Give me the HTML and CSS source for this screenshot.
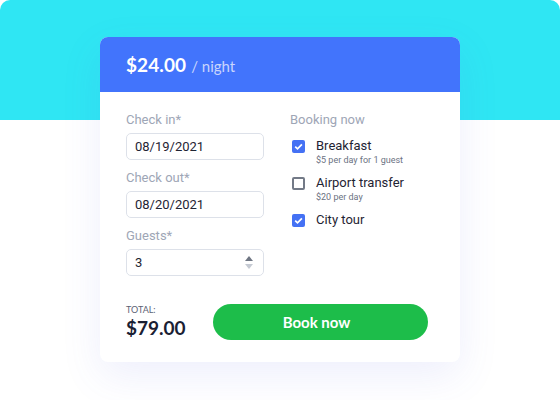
FILE: index.html
```html
<!DOCTYPE html>
<html lang="en">
<head>
<meta charset="utf-8">
<title>Booking</title>
<link rel="stylesheet" href="styles.css">
</head>
<body>
<div class="page">
  <div class="card">
    <div class="card-head">
      <span class="price">$24.00</span><span class="per">/ night</span>
    </div>
    <div class="card-body">
      <div class="col-left">
        <label class="label">Check in*</label>
        <div class="input">08/19/2021</div>
        <label class="label">Check out*</label>
        <div class="input">08/20/2021</div>
        <label class="label">Guests*</label>
        <div class="input number">3<span class="spin"><span class="up"></span><span class="down"></span></span></div>
      </div>
      <div class="col-right">
        <div class="label">Booking now</div>
        <div class="opt">
          <div class="opt-row"><span class="cb checked"><svg viewBox="0 0 13 13" width="13" height="13"><path d="M3.2 6.6 L5.5 8.9 L9.9 4.3" fill="none" stroke="#fff" stroke-width="1.7"/></svg></span>Breakfast</div>
          <div class="opt-sub">$5 per day for 1 guest</div>
        </div>
        <div class="opt">
          <div class="opt-row"><span class="cb"></span>Airport transfer</div>
          <div class="opt-sub">$20 per day</div>
        </div>
        <div class="opt">
          <div class="opt-row"><span class="cb checked"><svg viewBox="0 0 13 13" width="13" height="13"><path d="M3.2 6.6 L5.5 8.9 L9.9 4.3" fill="none" stroke="#fff" stroke-width="1.7"/></svg></span>City tour</div>
        </div>
      </div>
    </div>
    <div class="card-foot">
      <div class="total">
        <div class="total-label">TOTAL:</div>
        <div class="total-value">$79.00</div>
      </div>
      <button class="book">Book now</button>
    </div>
  </div>
</div>
</body>
</html>
```

FILE: styles.css
```css
* { box-sizing: border-box; }
html, body { margin: 0; padding: 0; background: #fff; }
body { width: 560px; height: 400px; overflow: hidden; font-family: Roboto, "Liberation Sans", sans-serif; }
.page {
  height: 400px;
  padding-top: 37px;
  background: linear-gradient(#2fe6f3 0, #2fe6f3 120px, #fff 120px);
  border-radius: 10px 10px 0 0;
}
.card {
  width: 360px;
  margin: 0 auto;
  background: #fff;
  border-radius: 8px;
  overflow: hidden;
  box-shadow: 0 14px 40px rgba(90, 100, 230, 0.10);
}
.card-head {
  height: 55px;
  background: #4274fc;
  padding: 0 26px;
  display: flex;
  align-items: center;
  font-family: Lato, "Open Sans", sans-serif;
}
.price { color: #fff; font-size: 19px; font-weight: 700; letter-spacing: 0.1px; }
.per { color: #c9d5fd; font-size: 15px; margin-left: 5px; padding-top: 2px; }
.card-body {
  display: grid;
  grid-template-columns: 138px 1fr;
  column-gap: 26px;
  padding: 20px 26px 0;
}
.col-left { display: flex; flex-direction: column; }
.label {
  font-size: 13px;
  line-height: 16px;
  color: #9ea6b6;
  margin-bottom: 5px;
}
.input {
  height: 27px;
  border: 1px solid #dde1e9;
  border-radius: 5px;
  padding: 0 8px;
  font-size: 13px;
  line-height: 25px;
  color: #1f2433;
  margin-bottom: 10px;
}
.input:last-child { margin-bottom: 0; }
.number { display: flex; justify-content: space-between; align-items: center; }
.spin { display: flex; flex-direction: column; gap: 3px; margin-right: 2px; }
.up { width: 0; height: 0; border-left: 4.5px solid transparent; border-right: 4.5px solid transparent; border-bottom: 5px solid #6f7683; }
.down { width: 0; height: 0; border-left: 4.5px solid transparent; border-right: 4.5px solid transparent; border-top: 5px solid #c5cad3; }
.col-right .label { margin-bottom: 10px; }
.opt { margin-bottom: 9px; }
.opt-row {
  display: flex;
  align-items: center;
  font-size: 13px;
  line-height: 16px;
  color: #1f2433;
}
.cb {
  width: 13px; height: 13px;
  margin-left: 2px;
  margin-right: 11px;
  border: 2px solid #737a87;
  border-radius: 2px;
  display: inline-flex;
}
.cb.checked { border: none; background: #4471f4; }
.opt-sub {
  font-size: 9px;
  line-height: 11px;
  color: #6b7282;
  margin-top: 1px;
  padding-left: 26px;
}
.card-foot {
  display: flex;
  align-items: center;
  justify-content: space-between;
  padding: 28px 32px 22px 26px;
}
.total-label { font-size: 9px; color: #5b6275; line-height: 11px; font-family: Lato, sans-serif; }
.total-value { font-family: Lato, sans-serif; font-size: 19px; font-weight: 700; color: #1a2033; line-height: 24px; margin-top: 1px; }
.book {
  width: 215px;
  height: 36px;
  border: none;
  border-radius: 18px;
  background: #1dbd4a;
  color: #fff;
  font-family: Lato, sans-serif;
  font-size: 15px;
  font-weight: 700;
  padding: 0 8px 0 0;
}
```
